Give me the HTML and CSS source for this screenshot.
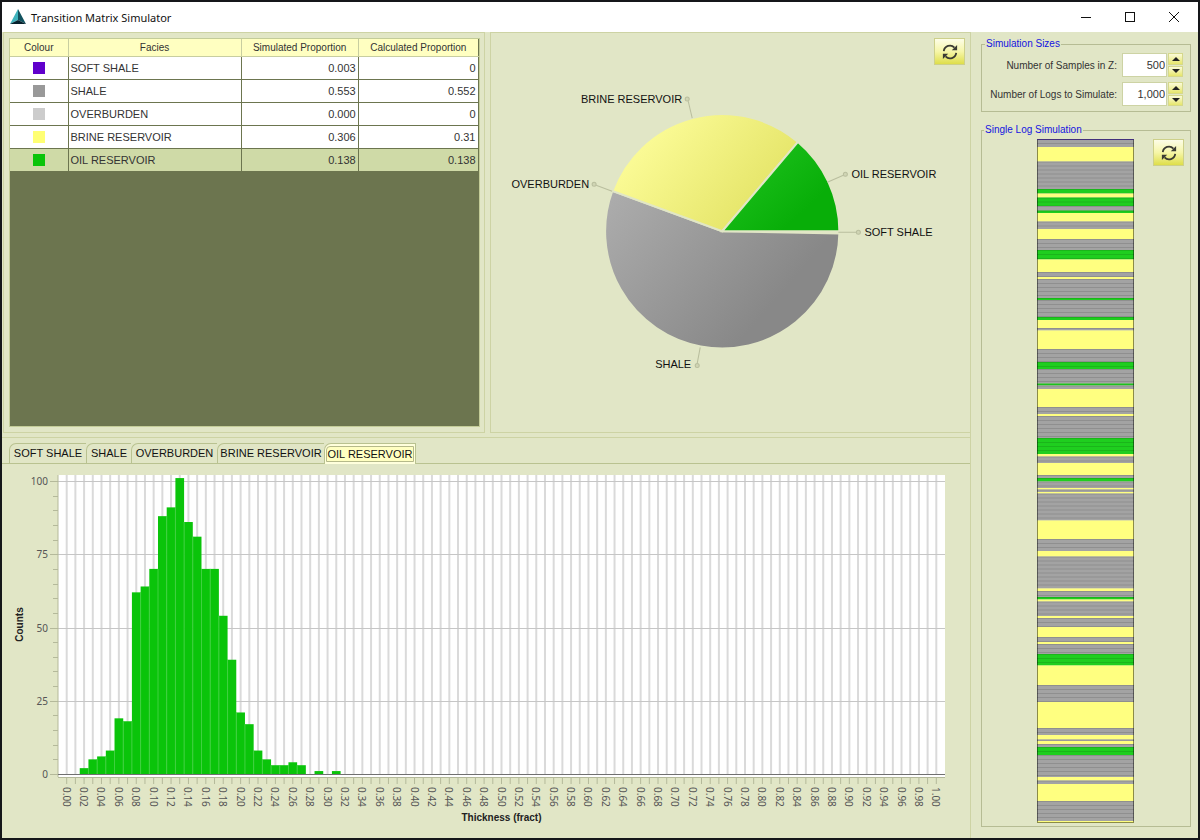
FILE: index.html
```html
<!DOCTYPE html>
<html lang="en">
<head>
  <meta charset="UTF-8" />
  <meta name="viewport" content="width=device-width, initial-scale=1.0"/>
  <title>Transition Matrix Simulator</title>
  <link rel="stylesheet" href="styles.css">
</head>
<body>
  <div class="window">
    <header class="titlebar">
      <svg class="logo" width="16" height="16" viewBox="0 0 16 16">
        <polygon points="8,0 0,15 8,11" fill="#3fb3bd"/>
        <polygon points="8,0 16,15 8,11" fill="#12525f"/>
        <polygon points="0,15 8,11 16,15" fill="#06212d"/>
      </svg>
      <h1>Transition Matrix Simulator</h1>
      <div class="window-buttons">
        <button aria-label="Minimize"><svg width="12" height="12" viewBox="0 0 12 12"><path d="M1 6.5h10"/></svg></button>
        <button aria-label="Maximize"><svg width="12" height="12" viewBox="0 0 12 12"><rect x="1.5" y="1.5" width="9" height="9"/></svg></button>
        <button aria-label="Close"><svg width="12" height="12" viewBox="0 0 12 12"><path d="M1 1l10 10M11 1L1 11"/></svg></button>
      </div>
    </header>

    <main class="content">
      <div class="left">
        <div class="top">
          <section class="table-panel">
            <div class="table-wrap">
              <table>
                <thead>
                  <tr>
                    <th class="col-colour">Colour</th>
                    <th class="col-facies">Facies</th>
                    <th class="col-sim">Simulated Proportion</th>
                    <th class="col-calc">Calculated Proportion</th>
                  </tr>
                </thead>
                <tbody>
                  <tr><td><i class="swatch soft"></i></td><td>SOFT SHALE</td><td>0.003</td><td>0</td></tr>
                  <tr><td><i class="swatch shale"></i></td><td>SHALE</td><td>0.553</td><td>0.552</td></tr>
                  <tr><td><i class="swatch over"></i></td><td>OVERBURDEN</td><td>0.000</td><td>0</td></tr>
                  <tr><td><i class="swatch brine"></i></td><td>BRINE RESERVOIR</td><td>0.306</td><td>0.31</td></tr>
                  <tr class="selected"><td><i class="swatch oil"></i></td><td>OIL RESERVOIR</td><td>0.138</td><td>0.138</td></tr>
                </tbody>
              </table>
            </div>
          </section>

          <section class="pie-panel">
            <svg class="pie" viewBox="0 0 479 398">
              <defs>
                <linearGradient id="gShale" gradientUnits="userSpaceOnUse" x1="140" y1="130" x2="290" y2="260">
                  <stop offset="0" stop-color="#adadad"/><stop offset="1" stop-color="#888888"/>
                </linearGradient>
                <linearGradient id="gBrine" gradientUnits="userSpaceOnUse" x1="165" y1="100" x2="265" y2="185">
                  <stop offset="0" stop-color="#fafa94"/><stop offset="1" stop-color="#e4e467"/>
                </linearGradient>
                <linearGradient id="gOil" gradientUnits="userSpaceOnUse" x1="255" y1="120" x2="310" y2="180">
                  <stop offset="0" stop-color="#1cc01c"/><stop offset="1" stop-color="#08ae08"/>
                </linearGradient>
              </defs>
              <g id="slices"></g>
              <g class="leaders">
                <path d="M197 68l4 17"/><circle cx="196" cy="66" r="2"/>
                <path d="M105 152l16 6"/><circle cx="103" cy="151" r="2"/>
                <path d="M336 149l16-7"/><circle cx="354" cy="141" r="2"/>
                <path d="M347 199h18"/><circle cx="367" cy="199" r="2"/>
                <path d="M209 314l-3 16"/><circle cx="206" cy="332" r="2"/>
              </g>
              <g class="pie-labels">
                <text x="191" y="70" text-anchor="end">BRINE RESERVOIR</text>
                <text x="98" y="155" text-anchor="end">OVERBURDEN</text>
                <text x="360" y="145">OIL RESERVOIR</text>
                <text x="373" y="203">SOFT SHALE</text>
                <text x="200" y="335" text-anchor="end">SHALE</text>
              </g>
            </svg>
            <button class="refresh refresh-pie" aria-label="Refresh proportions">
              <svg width="16" height="16" viewBox="0 0 18 18"><path d="M2 8a7 7 0 0 1 12-4M16 10a7 7 0 0 1-12 4"/><path class="head" d="M17 1v6h-6zM1 17v-6h6z"/></svg>
            </button>
          </section>
        </div>

        <section class="bottom">
          <div class="tabs" role="tablist">
            <button role="tab" class="tab tab-soft">SOFT SHALE</button>
            <button role="tab" class="tab tab-shale">SHALE</button>
            <button role="tab" class="tab tab-over">OVERBURDEN</button>
            <button role="tab" class="tab tab-brine">BRINE RESERVOIR</button>
            <button role="tab" class="tab tab-oil active" aria-selected="true"><span>OIL RESERVOIR</span></button>
          </div>
          <div class="chart"><svg id="histogram"></svg></div>
        </section>
      </div>

      <aside class="right">
        <fieldset class="sizes">
          <legend>Simulation Sizes</legend>
          <div class="field">
            <label for="samples">Number of Samples in Z:</label>
            <div class="spinner">
              <input id="samples" type="text" value="500">
              <div class="steps">
                <button aria-label="More samples"><i class="up"></i></button>
                <button aria-label="Fewer samples"><i class="down"></i></button>
              </div>
            </div>
          </div>
          <div class="field">
            <label for="logs">Number of Logs to Simulate:</label>
            <div class="spinner">
              <input id="logs" type="text" value="1,000">
              <div class="steps">
                <button aria-label="More logs"><i class="up"></i></button>
                <button aria-label="Fewer logs"><i class="down"></i></button>
              </div>
            </div>
          </div>
        </fieldset>

        <fieldset class="single">
          <legend>Single Log Simulation</legend>
          <div class="log-row">
            <svg id="log" viewBox="0 0 97 684" preserveAspectRatio="none"></svg>
            <button class="refresh" aria-label="Refresh log">
              <svg width="16" height="16" viewBox="0 0 18 18"><path d="M2 8a7 7 0 0 1 12-4M16 10a7 7 0 0 1-12 4"/><path class="head" d="M17 1v6h-6zM1 17v-6h6z"/></svg>
            </button>
          </div>
        </fieldset>
      </aside>
    </main>
  </div>

  <script src="script.js"></script>
</body>
</html>
```

FILE: styles.css
```css
* {
  box-sizing: border-box;
}

body {
  margin: 0;
  font-family: "Liberation Sans", Arial, sans-serif;
  font-size: 11px;
  color: #333;
}

button {
  font: inherit;
  color: inherit;
  padding: 0;
  cursor: pointer;
}

.window {
  display: flex;
  flex-direction: column;
  height: 100vh;
  border: 2px solid #15171a;
  background: #e1e6c6;
}

/* title bar */
.titlebar {
  display: flex;
  align-items: center;
  height: 30px;
  padding: 0 2px 0 8px;
  background: #fff;
}

.titlebar h1 {
  flex: 1;
  margin: 0 0 0 5px;
  font-family: "Noto Sans", sans-serif;
  font-size: 11px;
  font-weight: normal;
  color: #111;
}

.window-buttons {
  display: flex;
}

.window-buttons button {
  display: flex;
  align-items: center;
  justify-content: center;
  width: 44px;
  height: 30px;
  border: none;
  background: none;
}

.window-buttons svg {
  fill: none;
  stroke: #111;
}

.content {
  flex: 1;
  display: flex;
  min-height: 0;
}

.left {
  flex: 1;
  display: flex;
  flex-direction: column;
  min-width: 0;
  border-right: 1px solid #cdd3a4;
}

.top {
  flex: 1;
  display: flex;
  gap: 5px;
  min-height: 0;
  padding-left: 1px;
}

.table-panel,
.pie-panel {
  flex: 1 1 0;
  min-width: 0;
  border: 1px solid #cdd3a4;
}

.pie-panel {
  border-right: none;
}

/* facies table */
.table-panel > .table-wrap {
  margin: 5px 4px 5px 5px;
}

.table-wrap {
  height: calc(100% - 10px);
  background: #6c754f;
  border: 1px solid #c3cc98;
}

table {
  width: 100%;
  table-layout: fixed;
  border-collapse: collapse;
}

th {
  height: 17px;
  padding: 0;
  background: #ffffc1;
  border: 1px solid #c8cea0;
  border-top: none;
  font-size: 10px;
  font-weight: normal;
}

td {
  height: 23px;
  padding: 0 2px;
  background: #fff;
  border: 1px solid #6c754f;
}

th:first-child,
td:first-child {
  border-left: none;
}

th:last-child {
  border-right: none;
}

td:first-child {
  text-align: center;
}

td:nth-child(n+3) {
  text-align: right;
}

.selected td {
  background: #cfdaa7;
}

.col-colour {
  width: 58px;
}

.col-facies {
  width: 37%;
}

.col-sim {
  width: 25%;
}

.swatch {
  display: block;
  width: 12px;
  height: 12px;
  margin: 0 auto;
}

.soft {
  background: #6000cc;
}

.shale {
  background: #999;
}

.over {
  background: #ccc;
}

.brine {
  background: #ffff73;
}

.oil {
  background: #0ac40a;
}

/* pie */
.pie-panel {
  position: relative;
}

.pie {
  display: block;
  width: 100%;
  height: 100%;
}

.leaders {
  fill: #d0d5b4;
  stroke: #b9be9e;
}

.pie-labels {
  font-size: 11px;
  fill: #111;
}

.refresh {
  display: flex;
  align-items: center;
  justify-content: center;
  width: 31px;
  height: 27px;
  border: 1px solid #cdd08a;
  background: linear-gradient(#fdfde8, #f6f6a8 50%, #dede4a);
}

.refresh path {
  fill: none;
  stroke: #3b3b33;
  stroke-width: 2;
}

.refresh .head {
  fill: #3b3b33;
  stroke: none;
}

.refresh-pie {
  position: absolute;
  top: 5px;
  right: 5px;
}

/* tabs and histogram */
.bottom {
  flex: 1;
  display: flex;
  flex-direction: column;
  min-height: 0;
  margin-top: 4px;
  border-top: 1px solid #cdd3a4;
}

.tabs {
  display: flex;
  height: 26px;
  padding: 5px 7px 0;
  border-bottom: 1px solid #b9c290;
}

.tab {
  height: 20px;
  border: 1px solid #b9c290;
  border-right: none;
  border-bottom: none;
  border-radius: 7px 0 0 0;
  background: #e1e6c6;
  color: #111;
}

.tab-soft {
  width: 77px;
}

.tab-shale {
  width: 45px;
}

.tab-over {
  width: 86px;
}

.tab-brine {
  width: 107px;
}

.tab-oil {
  width: 92px;
}

.tab.active {
  height: 21px;
  padding: 2px 1px;
  border-right: 1px solid #b9c290;
  background: #ffffdc;
}

.tab.active span {
  display: block;
  height: 16px;
  line-height: 14px;
  border: 1px solid #b5b98a;
  border-radius: 4px 0 0 0;
  background: #ffffc1;
}

.chart {
  flex: 1;
  min-height: 0;
}

.chart svg {
  display: block;
  width: 100%;
  height: 100%;
}

.plot {
  fill: #fff;
}

.grid {
  stroke: #c6c6c6;
}

.grid-v {
  stroke: #dadada;
  stroke-width: 2;
}

.tick {
  stroke: #b4b99a;
}

.zero {
  stroke: #707070;
}

.bar {
  fill: #0ac40a;
}

.bar-edge {
  stroke: #3fd03f;
}

.tick-label {
  font-family: "Noto Sans", sans-serif;
  font-size: 10px;
  fill: #555;
}

.axis-title {
  font-size: 10px;
  font-weight: bold;
  fill: #222;
}

/* right column */
.right {
  display: flex;
  flex-direction: column;
  gap: 11px;
  width: 227px;
  padding: 5px 7px 11px 10px;
}

fieldset {
  min-width: 0;
  margin: 0;
  padding: 0 6px;
  border: 1px solid #b6bc94;
}

legend {
  margin-left: -4px;
  padding: 0 1px;
  line-height: 14px;
  color: #1414e0;
}

legend,
label {
  font-size: 10px;
}

.sizes {
  padding: 2px 7px 5px;
}

.field {
  display: flex;
  align-items: center;
  justify-content: flex-end;
  gap: 5px;
}

.field + .field {
  margin-top: 5px;
}

.spinner {
  display: flex;
  gap: 1px;
  height: 24px;
}

.spinner input {
  width: 45px;
  padding: 0 1px;
  border: 1px solid #cdd3a4;
  background: #fff;
  font: inherit;
  color: #333;
  text-align: right;
}

.steps {
  display: flex;
  flex-direction: column;
  gap: 1px;
  width: 15px;
}

.steps button {
  flex: 1;
  display: flex;
  align-items: center;
  justify-content: center;
  border: 1px solid #d5d88c;
  background: linear-gradient(#fbfbd8, #e6e66c);
}

.up,
.down {
  border: 4px solid transparent;
}

.up {
  border-top: none;
  border-bottom: 4px solid #222;
}

.down {
  border-bottom: none;
  border-top: 4px solid #222;
}

.single {
  flex: 1;
  display: flex;
  min-height: 0;
}

.log-row {
  flex: 1;
  display: flex;
  align-items: flex-start;
  justify-content: flex-end;
  gap: 19px;
  padding: 2px 0 3px;
}

#log {
  width: 97px;
  height: 100%;
}
```

FILE: script.js
```js
const NS = 'http://www.w3.org/2000/svg';

function add(parent, name, attrs, text) {
  const el = document.createElementNS(NS, name);
  for (const key in attrs) el.setAttribute(key, attrs[key]);
  if (text !== undefined) el.textContent = text;
  parent.appendChild(el);
  return el;
}

function line(parent, x1, y1, x2, y2, cls) {
  add(parent, 'line', { x1, y1, x2, y2, class: cls });
}

// counts per 0.01 bin, starting at 0.00
const counts = [0, 0, 2, 5, 6, 8, 19, 18, 62, 64, 70, 88, 91, 101, 86, 81, 70, 70,
  54, 39, 21, 17, 8, 5, 3, 3, 4, 3, 0, 1, 0, 1];

function drawHistogram() {
  const svg = document.getElementById('histogram');
  svg.innerHTML = '';
  const w = svg.clientWidth;
  const h = svg.clientHeight;
  const left = 56, right = w - 25, top = 11, base = h - 65;
  const step = (right - left) / 102;
  const unit = (base - top - 6) / 100;
  const xAt = i => left + step * (i + 1);

  add(svg, 'rect', { x: left, y: top, width: right - left, height: base - top + 3, class: 'plot' });
  for (let i = 0; i <= 100; i++) {
    line(svg, xAt(i), top, xAt(i), base, 'grid-v');
    line(svg, xAt(i), base + 3, xAt(i), base + 10, 'tick');
    if (i % 2 === 0) {
      add(svg, 'text', {
        class: 'tick-label',
        transform: `translate(${xAt(i) - 4} ${base + 13}) rotate(90)`
      }, (i / 100).toFixed(2));
    }
  }
  for (let v = 0; v <= 100; v += 5) {
    const y = Math.round(base - v * unit) + 0.5;
    const major = v % 25 === 0;
    line(svg, major ? left - 8 : left - 5, y, left, y, 'tick');
    if (major) {
      line(svg, left, y, right, y, 'grid');
      add(svg, 'text', { x: left - 10, y: y + 3, 'text-anchor': 'end', class: 'tick-label' }, v);
    }
  }
  counts.forEach((n, i) => {
    if (!n) return;
    const x = xAt(i) - step / 2;
    add(svg, 'rect', { x, y: base - n * unit, width: step, height: n * unit, class: 'bar' });
    if (counts[i - 1]) {
      line(svg, x, base - Math.min(n, counts[i - 1]) * unit, x, base, 'bar-edge');
    }
  });
  line(svg, left, top, left, base + 3, 'tick');
  line(svg, left, base + 3.5, right, base + 3.5, 'tick');
  line(svg, left, base + 0.5, right, base + 0.5, 'zero');
  add(svg, 'text', { x: (left + right) / 2, y: base + 47, 'text-anchor': 'middle', class: 'axis-title' }, 'Thickness (fract)');
  add(svg, 'text', {
    class: 'axis-title',
    'text-anchor': 'middle',
    transform: `translate(21 ${(top + base) / 2}) rotate(-90)`
  }, 'Counts');
}

// share of each slice, clockwise from east
function drawPie() {
  const g = document.getElementById('slices');
  const cx = 231, cy = 198, r = 117;
  const slices = [[0.003, '#e1e6c6'], [0.553, 'url(#gShale)'], [0.306, 'url(#gBrine)'], [0.138, 'url(#gOil)']];
  let a = 0;
  slices.forEach(([share, fill]) => {
    const b = a + share * 2 * Math.PI;
    const big = share > 0.5 ? 1 : 0;
    add(g, 'path', {
      d: `M${cx} ${cy}L${cx + r * Math.cos(a)} ${cy + r * Math.sin(a)}A${r} ${r} 0 ${big} 1 ${cx + r * Math.cos(b)} ${cy + r * Math.sin(b)}Z`,
      fill, stroke: '#e1e6c6', 'stroke-width': 2
    });
    a = b;
  });
}

// facies and the depth at which each bed ends
const beds = [
  ['s', 8], ['b', 22.5], ['s', 50], ['o', 54.5], ['b', 58.5], ['o', 67], ['s', 71.5], ['o', 74],
  ['b', 82.5], ['s', 90], ['b', 100], ['s', 111], ['o', 120.5], ['b', 133], ['s', 138], ['b', 140],
  ['s', 159], ['o', 161], ['s', 178], ['o', 181], ['b', 189], ['s', 191.5], ['b', 210], ['s', 223],
  ['o', 230], ['s', 244.5], ['o', 246.5], ['s', 250], ['b', 268], ['s', 275], ['b', 277], ['s', 299],
  ['o', 315], ['b', 317.5], ['s', 324], ['b', 336], ['s', 339], ['o', 342.5], ['s', 349], ['b', 350.5],
  ['s', 353], ['b', 354.5], ['s', 381.5], ['b', 400], ['s', 412], ['b', 417.5], ['s', 449.5], ['b', 452],
  ['s', 458], ['o', 460.5], ['b', 462.5], ['s', 477], ['b', 479], ['s', 488], ['b', 498], ['s', 503],
  ['b', 505], ['s', 515], ['o', 526.5], ['b', 546], ['s', 563], ['b', 589], ['s', 596], ['b', 600.5],
  ['s', 602], ['b', 605], ['s', 608], ['o', 616], ['s', 638], ['b', 641.5], ['s', 645], ['b', 662],
  ['s', 682], ['b', 684]
];
const faciesFill = { s: '#a3a3a3', b: '#ffff80', o: '#1fce1f' };

function drawLog() {
  const svg = document.getElementById('log');
  let y = 0;
  beds.forEach(([f, end]) => {
    add(svg, 'rect', { x: 0, y, width: 97, height: end - y, fill: faciesFill[f] });
    if (f !== 'b') {
      for (let s = y; s < end; s += 4) {
        add(svg, 'rect', { x: 0, y: s, width: 97, height: 1, fill: '#000', opacity: 0.12 });
      }
    }
    y = end;
  });
  add(svg, 'rect', { x: 0.5, y: 0.5, width: 96, height: 683, fill: 'none', stroke: '#000', 'stroke-opacity': 0.45 });
  add(svg, 'rect', { x: 0, y: 0, width: 97, height: 1, fill: '#43307c' });
}

drawPie();
drawLog();
drawHistogram();
window.addEventListener('resize', drawHistogram);
```
